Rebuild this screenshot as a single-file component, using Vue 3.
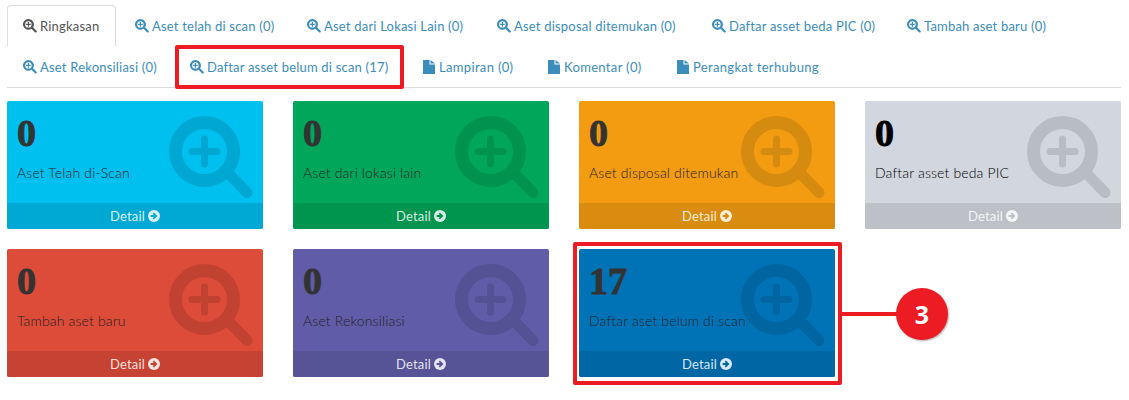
<script setup>
const zoomPath = 'M6.2 1a5.2 5.2 0 1 0 3 9.45l3.3 3.3a1 1 0 0 0 1.5-1.5l-3.3-3.3A5.2 5.2 0 0 0 6.2 1zm0 2.100a3.100 3.100 0 1 1 0 6.200 3.100 3.100 0 0 1 0-6.200zM5.600 4v1.600H4v1.200h1.600v1.600h1.200V6.800h1.600V5.600H6.800V4z'
const row1 = [
  { t: 'Ringkasan', active: true, w: 109 },
  { t: 'Aset telah di scan (0)', w: 172 },
  { t: 'Aset dari Lokasi Lain (0)', w: 190 },
  { t: 'Aset disposal ditemukan (0)', w: 215 },
  { t: 'Daftar asset beda PIC (0)', w: 195 },
  { t: 'Tambah aset baru (0)', w: 171 }
]
const row2 = [
  { t: 'Aset Rekonsiliasi (0)', w: 167 },
  { t: 'Daftar asset belum di scan (17)', w: 233 },
  { t: 'Lampiran (0)', w: 125, doc: true },
  { t: 'Komentar (0)', w: 129, doc: true },
  { t: 'Perangkat terhubung', w: 175, doc: true }
]
const cards = [
  { n: '0', l: 'Aset Telah di-Scan', bg: '#00c0ef', ft: '#00a9d3', ic: '#00a7d2' },
  { n: '0', l: 'Aset dari lokasi lain', bg: '#00a65a', ft: '#00954f', ic: '#009350' },
  { n: '0', l: 'Aset disposal ditemukan', bg: '#f39c12', ft: '#da8c10', ic: '#d58a10' },
  { n: '0', l: 'Daftar asset beda PIC', bg: '#d2d6de', ft: '#bdc0c7', ic: '#b8bcc3', dark: true },
  { n: '0', l: 'Tambah aset baru', bg: '#dd4b39', ft: '#c64333', ic: '#c24232' },
  { n: '0', l: 'Aset Rekonsiliasi', bg: '#605ca8', ft: '#565397', ic: '#545194' },
  { n: '17', l: 'Daftar aset belum di scan', bg: '#0073b7', ft: '#0067a4', ic: '#0065a1', marked: true }
]
</script>

<template>
  <div class="page">
    <nav class="tabs">
      <div class="tab-row">
        <a v-for="tab in row1" :key="tab.t" class="tab" :class="{ active: tab.active }" :style="{ width: tab.w + 'px' }">
          <svg class="tab-icon" viewBox="1 1 13.500 13.500"><path :d="zoomPath" fill="currentColor" fill-rule="evenodd" /></svg>
          <span>{{ tab.t }}</span>
        </a>
      </div>
      <div class="tab-row">
        <a v-for="tab in row2" :key="tab.t" class="tab" :class="{ 'doc-tab': tab.doc }" :style="{ width: tab.w + 'px' }">
          <svg v-if="tab.doc" class="tab-icon doc" viewBox="0 0 12 14"><path d="M0 0h6.500v4.500H12V14H0zM7.500 0 12 3.500H7.500z" fill="currentColor" /></svg>
          <svg v-else class="tab-icon" viewBox="1 1 13.500 13.500"><path :d="zoomPath" fill="currentColor" fill-rule="evenodd" /></svg>
          <span>{{ tab.t }}</span>
        </a>
      </div>
      <div class="mark tab-mark"></div>
    </nav>

    <section class="grid">
      <article v-for="c in cards" :key="c.l" class="card" :class="{ dark: c.dark }" :style="{ background: c.bg }">
        <div class="body">
          <h3>{{ c.n }}</h3>
          <p>{{ c.l }}</p>
          <svg class="big-icon" viewBox="0 0 84 84" :style="{ color: c.ic }">
            <circle cx="35.500" cy="35.500" r="29" fill="none" stroke="currentColor" stroke-width="13" />
            <path d="M57 55l21 21.500" stroke="currentColor" stroke-width="11" stroke-linecap="round" />
            <path d="M35.500 23v25M23 35.500h25" stroke="currentColor" stroke-width="7" stroke-linecap="round" />
          </svg>
        </div>
        <div class="foot" :style="{ background: c.ft }">
          <span>Detail</span>
          <svg class="arrow" viewBox="0 0 12 12"><circle cx="6" cy="6" r="6" fill="currentColor" /><path d="M2.600 6h5M5.300 3.200 8.200 6 5.300 8.800" fill="none" :stroke="c.ft" stroke-width="1.800" /></svg>
        </div>
        <div v-if="c.marked" class="mark card-mark"></div>
        <div v-if="c.marked" class="callout">
          <i></i>
          <b>3</b>
        </div>
      </article>
    </section>
  </div>
</template>

<style>
html, body { margin: 0; background: #fff; }
</style>

<style scoped>
.page {
  width: 1129px;
  height: 400px;
  box-sizing: border-box;
  padding: 5px 8px 0 7px;
  overflow: hidden;
  font-family: "Lato", "Noto Sans", sans-serif;
  font-size: 13px;
  color: #333;
}
.tabs {
  position: relative;
  height: 82px;
  border-bottom: 1px solid #ddd;
}
.tab-row { display: flex; height: 41px; }
.tab {
  box-sizing: border-box;
  display: flex;
  align-items: center;
  gap: 3px;
  padding: 0 0 0 16px;
  color: #3c8dbc;
  white-space: nowrap;
  letter-spacing: 0.2px;
}
.doc-tab { letter-spacing: 0.33px; }
.tab.active {
  color: #555;
  border: 1px solid #ddd;
  border-bottom: 0;
  border-radius: 4px 4px 0 0;
  padding-left: 15px;
  margin-right: 3px;
}
.tab-icon { width: 14px; height: 14px; flex: none; }
.tab-icon.doc { width: 12px; height: 14px; margin-right: 1px; }
.grid {
  display: grid;
  grid-template-columns: repeat(4, 256px);
  column-gap: 30px;
  row-gap: 20px;
  margin-top: 13px;
}
.card {
  position: relative;
  height: 128px;
  border-radius: 2px;
  display: flex;
  flex-direction: column;
}
.body { position: relative; flex: 1; padding: 10px; overflow: hidden; }
h3 {
  margin: 0;
  font-family: "Liberation Serif", serif;
  font-size: 38px;
  line-height: 44px;
  font-weight: 700;
  -webkit-text-stroke: 0.9px #333;
  color: #333;
}
p { margin: 8px 0 0; line-height: 20px; font-size: 14px; font-weight: 300; letter-spacing: 0.15px; color: #222; }
.dark h3 { color: #000; -webkit-text-stroke-color: #000; }
.dark p { color: #000; }
.big-icon { position: absolute; right: 10px; top: 15px; width: 84px; height: 84px; }
.foot {
  height: 26px;
  flex: none;
  display: flex;
  align-items: center;
  justify-content: center;
  gap: 1px;
  color: rgba(255, 255, 255, 0.85);
  font-size: 13px;
  letter-spacing: 0.2px;
  border-radius: 0 0 2px 2px;
}
.arrow { width: 12px; height: 12px; margin-left: 2px; }
.mark {
  position: absolute;
  box-sizing: border-box;
  border: 4px solid #ed1c24;
  border-radius: 2px;
}
.tab-mark { left: 168px; top: 40px; width: 229px; height: 44px; }
.card-mark { left: -6px; top: -7px; width: 269px; height: 143px; }
.callout { position: absolute; left: 263px; top: 39px; display: flex; align-items: center; }
.callout i { width: 55px; height: 4px; background: #ed1c24; }
.callout b {
  width: 52px;
  height: 52px;
  margin-left: -1px;
  border-radius: 50%;
  background: #ed1c24;
  color: #fff;
  font: 700 25px/52px "Open Sans", sans-serif;
  text-align: center;
  box-shadow: 1px 1px 2px rgba(0, 0, 0, 0.3);
}
</style>
